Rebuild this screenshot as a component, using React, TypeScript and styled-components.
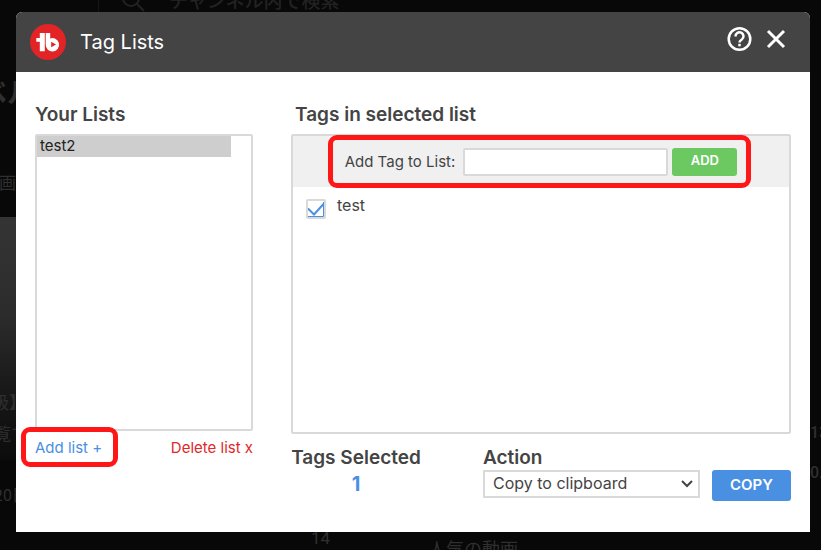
import React, { useState } from "react";
import styled, { createGlobalStyle, css } from "styled-components";

const GlobalStyle = createGlobalStyle`
  *, *::before, *::after { box-sizing: border-box; }
  body {
    margin: 0;
    background: #080808;
    color: #444;
    font-family: Inter, "Noto Sans CJK JP", sans-serif;
    font-size: 15px;
  }
  button, input, select { font: inherit; color: inherit; }
`;

const Stage = styled.div`
  position: relative;
  min-height: 100vh;
  padding: 12px 11px 18px 16px;
  overflow: hidden;
`;

const Backdrop = styled.div`
  position: absolute;
  inset: 0;
  display: grid;
  grid-template-columns: 16px 1fr 11px;
  grid-template-rows: 12px 1fr 18px;
  color: #2f2f2f;
  font-family: "Noto Sans CJK JP", sans-serif;
  white-space: nowrap;
  overflow: hidden;
`;

const SearchBar = styled.div`
  grid-column: 2;
  grid-row: 1;
  display: flex;
  gap: 22px;
  align-items: flex-end;
  height: 12px;
  margin-left: 82px;
  padding-left: 22px;
  border-left: 1px solid #161616;
  color: #222;
  font-size: 19px;
  font-weight: 500;
  line-height: 24px;
`;

const LeftStrip = styled.div`
  grid-column: 1;
  grid-row: 2;
  display: flex;
  flex-direction: column;
`;

const RightStrip = styled.div`
  grid-column: 3;
  grid-row: 2;
  display: flex;
  flex-direction: column;
  font: 500 16px/40px Roboto, sans-serif;
  padding-top: 401px;
`;

const StripText = styled.div<{ $size: number; $height: number; $pull?: number; $bold?: boolean }>`
  flex: none;
  font-size: ${(p) => p.$size}px;
  font-weight: ${(p) => (p.$bold ? 700 : 400)};
  height: ${(p) => p.$height}px;
  line-height: ${(p) => p.$height}px;
  margin-left: -${(p) => p.$pull ?? 0}px;
`;

const Thumbnail = styled.div`
  display: flex;
  flex: none;
  flex-direction: column;
  justify-content: flex-end;
  height: 243px;
  margin-top: 24px;
  padding-bottom: 12px;
  background: linear-gradient(#343434, #2c2c2c 40%, #161616 75%, #0c0c0c);
`;

const BottomStrip = styled.div`
  grid-column: 2;
  grid-row: 3;
  display: flex;
  padding-left: 295px;
  font-size: 18px;
`;

const Duration = styled.span`
  width: 117px;
  font-family: Roboto, sans-serif;
  font-size: 17px;
  line-height: 12px;
`;

const SectionName = styled.span`
  line-height: 32px;
`;

const Dialog = styled.section`
  position: relative;
  display: flex;
  flex-direction: column;
  min-height: calc(100vh - 30px);
  border-radius: 6px 6px 0 0;
  background: #fff;
`;

const Header = styled.header`
  display: flex;
  align-items: center;
  height: 60px;
  padding: 0 22px 0 14px;
  border-radius: 6px 6px 0 0;
  background: #444;
  color: #fff;
`;

const Title = styled.h1`
  flex: 1;
  margin: 0 0 0 14px;
  font-size: 20px;
  font-weight: 400;
`;

const HeaderActions = styled.div`
  display: flex;
  gap: 12px;
  padding-bottom: 6px;
`;

const IconButton = styled.button`
  display: flex;
  padding: 0;
  border: 0;
  background: none;
  cursor: pointer;
`;

const Body = styled.div`
  display: grid;
  grid-template-columns: 218px 1fr;
  column-gap: 38px;
  padding: 31px 19px 0;
`;

const Column = styled.div`
  min-width: 0;
`;

const Heading = styled.h2<{ $indent?: boolean }>`
  margin: 0;
  padding-left: ${(p) => (p.$indent ? 4 : 0)}px;
  font-size: 19px;
  font-weight: 600;
  line-height: 24px;
`;

const ListBox = styled.select`
  display: block;
  width: 100%;
  height: 297px;
  margin-top: 7px;
  padding: 0 20px 0 0;
  border: 2px solid #d9d9d9;
  border-radius: 2px;
  background: #fff;
  font-size: 15px;
  outline: none;
  overflow: hidden;

  option {
    height: 21px;
    padding: 0 3px;
    line-height: 18px;
    color: #222;
  }
  option:checked {
    background: #cecece linear-gradient(#cecece, #cecece);
    color: #222;
  }
`;

const ListActions = styled.div`
  display: flex;
  justify-content: space-between;
  padding-top: 7px;
`;

const TextLink = styled.a<{ $danger?: boolean }>`
  color: ${(p) => (p.$danger ? "#e02828" : "#4a90e2")};
  font-size: 15px;
  line-height: 20px;
  text-decoration: none;
`;

const marker = css`
  content: "";
  position: absolute;
  border: 5px solid #ff1616;
  border-radius: 9px;
  pointer-events: none;
`;

const MarkedLink = styled.div`
  position: relative;
  &::after {
    ${marker}
    inset: -11px -16px -9px -14px;
  }
`;

const TagPanel = styled.div`
  height: 300px;
  margin-top: 7px;
  border: 2px solid #d9d9d9;
  border-radius: 2px;
`;

const AddBar = styled.div`
  display: flex;
  justify-content: center;
  height: 51px;
  background: #f0f0f0;
`;

const AddForm = styled.form`
  position: relative;
  display: flex;
  align-items: center;
  &::after {
    ${marker}
    inset: -1px -14px -1px -17px;
  }
`;

const AddLabel = styled.label`
  margin-right: 8px;
  font-size: 15px;
`;

const AddInput = styled.input`
  width: 205px;
  height: 28px;
  padding: 0 6px;
  border: 2px solid #d9d9d9;
  border-radius: 2px;
  background: #fff;
  outline: none;
`;

const SolidButton = styled.button<{ $color: string; $size: number }>`
  padding: 0 0 3px;
  border: 0;
  border-radius: 3px;
  background: ${(p) => p.$color};
  color: #fff;
  font-size: ${(p) => p.$size}px;
  font-weight: 600;
  cursor: pointer;
`;

const AddButton = styled(SolidButton)`
  width: 65px;
  height: 28px;
  margin-left: 4px;
`;

const CopyButton = styled(SolidButton)`
  width: 79px;
  height: 31px;
`;

const TagRow = styled.label`
  display: flex;
  gap: 11px;
  padding: 8px 13px;
  font-size: 16px;
  line-height: 20px;
`;

const TagCheck = styled.input`
  appearance: none;
  width: 20px;
  height: 20px;
  margin: 4px 0 0;
  border: 2px solid #d9d9d9;
  border-radius: 2px;
  background: #fff;
  &:checked {
    background: url("data:image/svg+xml,%3Csvg xmlns='http://www.w3.org/2000/svg' viewBox='0 0 16 16' fill='none' stroke='%234a90e2'%3E%3Cpath d='M0 15.5H15.5V1' stroke-width='1'/%3E%3Cpath d='M0 7.5L6 13.5L15.5 3' stroke-width='2'/%3E%3C/svg%3E");
  }
`;

const Footer = styled.div`
  display: grid;
  grid-template-columns: 130px 1fr 79px;
  column-gap: 12px;
  padding-top: 12px;
`;

const Summary = styled.div`
  text-align: center;
  white-space: nowrap;
`;

const Count = styled.output`
  display: block;
  color: #4a90e2;
  font-size: 20px;
  font-weight: 700;
  line-height: 28px;
`;

const ActionField = styled.div`
  padding-left: 50px;
`;

const ActionLabel = styled.label`
  display: block;
  font-size: 19px;
  font-weight: 600;
  line-height: 24px;
`;

const SelectWrap = styled.div`
  display: grid;
  align-items: center;
  > * { grid-area: 1 / 1; }
  > svg { justify-self: end; margin-right: 6px; pointer-events: none; }
`;

const ActionSelect = styled.select`
  appearance: none;
  width: 100%;
  height: 28px;
  padding: 0 24px 2px 8px;
  border: 2px solid #d9d9d9;
  border-radius: 0;
  background: #fff;
  font-size: 16px;
`;

const CopyCell = styled.div`
  padding-top: 24px;
`;

function Logo() {
  return (
    <svg width="36" height="36" viewBox="0 0 36 36" aria-hidden="true">
      <circle cx="18" cy="18" r="18" fill="#e22427" />
      <path fill="#fff" d="M9.800 9H14.800V27.200H9.800V17.700H6.300V14H9.800Z" />
      <path fill="#fff" d="M15.700 9H20.200V14.400A6.700 6.700 0 1 1 15.700 20.600Z" />
      <path fill="#e22427" d="M21.200 17.800L26 20.500L21.200 23.300Z" />
    </svg>
  );
}

export default function App() {
  const [tag, setTag] = useState("");
  const [checked, setChecked] = useState(true);

  return (
    <>
      <GlobalStyle />
      <Stage>
        <Backdrop aria-hidden="true">
          <SearchBar>
            <svg width="26" height="24" viewBox="0 0 26 24" fill="none" stroke="#222" strokeWidth="2">
              <circle cx="10" cy="10" r="8" />
              <path d="M16 16L23 23" />
            </svg>
            <span>チャンネル内で検索</span>
          </SearchBar>
          <LeftStrip>
            <StripText $size={28} $height={158} $pull={21} $bold>ベル</StripText>
            <StripText $size={17} $height={23} $pull={1}>画</StripText>
            <Thumbnail>
              <StripText $size={17} $height={31} $pull={8}>級】</StripText>
              <StripText $size={17} $height={31} $pull={6}>覧で</StripText>
            </Thumbnail>
            <StripText $size={16} $height={68} $pull={6}>20日</StripText>
          </LeftStrip>
          <RightStrip>
            <span>13</span>
            <span>0.0</span>
          </RightStrip>
          <BottomStrip>
            <Duration>14</Duration>
            <SectionName>人気の動画</SectionName>
          </BottomStrip>
        </Backdrop>

        <Dialog role="dialog" aria-labelledby="dialog-title">
          <Header>
            <Logo />
            <Title id="dialog-title">Tag Lists</Title>
            <HeaderActions>
              <IconButton type="button" aria-label="Help">
                <svg width="26" height="26" viewBox="0 0 26 26" fill="none" stroke="#fff" strokeWidth="2.500">
                  <circle cx="13.500" cy="13" r="10.800" />
                  <path d="M9.500 10.500A4 4 0 1 1 15.800 13.500C14.300 14.400 13.500 15 13.500 16.500" />
                  <path d="M13.500 17.800V20.300" />
                </svg>
              </IconButton>
              <IconButton type="button" aria-label="Close">
                <svg width="24" height="26" viewBox="0 0 24 26" fill="none" stroke="#fff" strokeWidth="3">
                  <path d="M4 5L20 21M20 5L4 21" />
                </svg>
              </IconButton>
            </HeaderActions>
          </Header>

          <Body>
            <Column>
              <Heading id="lists-heading">Your Lists</Heading>
              <ListBox size={8} aria-labelledby="lists-heading" defaultValue="test2">
                <option value="test2">test2</option>
              </ListBox>
              <ListActions>
                <MarkedLink>
                  <TextLink href="#add">Add list +</TextLink>
                </MarkedLink>
                <TextLink href="#delete" $danger>Delete list x</TextLink>
              </ListActions>
            </Column>

            <Column>
              <Heading $indent>Tags in selected list</Heading>
              <TagPanel>
                <AddBar>
                  <AddForm onSubmit={(e) => e.preventDefault()}>
                    <AddLabel htmlFor="new-tag">Add Tag to List:</AddLabel>
                    <AddInput id="new-tag" value={tag} onChange={(e) => setTag(e.target.value)} />
                    <AddButton type="submit" $color="#6cc962" $size={13}>ADD</AddButton>
                  </AddForm>
                </AddBar>
                <TagRow>
                  <TagCheck type="checkbox" checked={checked} onChange={(e) => setChecked(e.target.checked)} />
                  test
                </TagRow>
              </TagPanel>
              <Footer>
                <Summary>
                  <Heading>Tags Selected</Heading>
                  <Count>{checked ? 1 : 0}</Count>
                </Summary>
                <ActionField>
                  <ActionLabel htmlFor="action">Action</ActionLabel>
                  <SelectWrap>
                    <ActionSelect id="action">
                      <option>Copy to clipboard</option>
                    </ActionSelect>
                    <svg width="14" height="10" viewBox="0 0 14 10" fill="none" stroke="#444" strokeWidth="2">
                      <path d="M2 2L7 7L12 2" />
                    </svg>
                  </SelectWrap>
                </ActionField>
                <CopyCell>
                  <CopyButton type="button" $color="#4a90e2" $size={15}>COPY</CopyButton>
                </CopyCell>
              </Footer>
            </Column>
          </Body>
        </Dialog>
      </Stage>
    </>
  );
}
